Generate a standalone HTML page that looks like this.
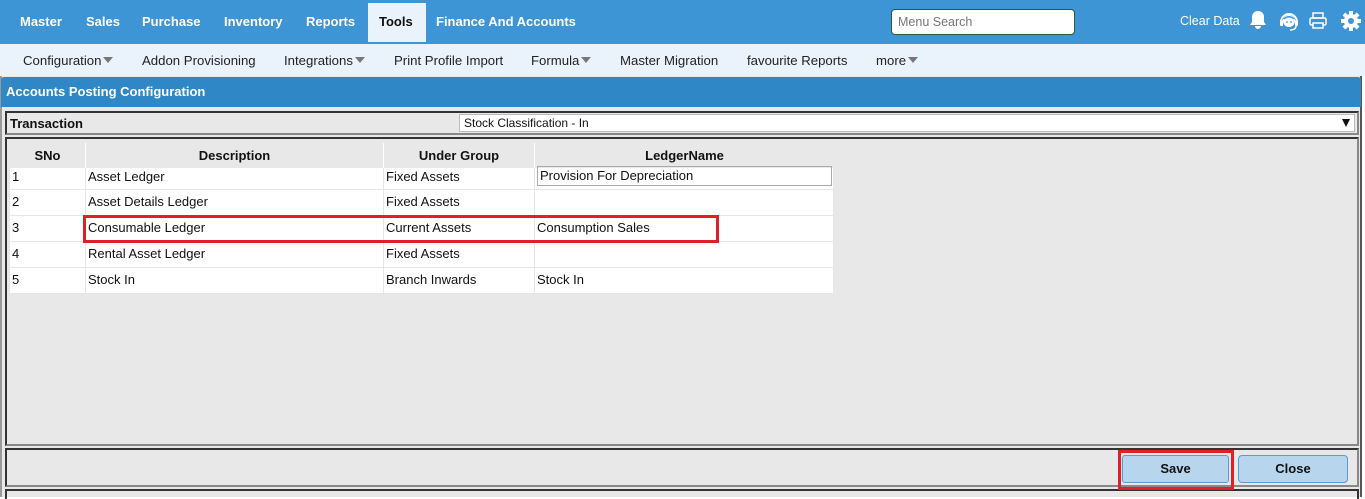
<!DOCTYPE html>
<html><head><style>
*{margin:0;padding:0;box-sizing:border-box}
body{width:1365px;height:497px;position:relative;overflow:hidden;background:#fff;font-family:"Liberation Sans",Arial,sans-serif;font-size:13px;color:#111}
.a{position:absolute}
.top{left:0;top:0;width:1365px;height:44px;background:#3d95d5}
.nav{top:14px;color:#fff;font-weight:bold;font-size:13px}
.sub{left:0;top:44px;width:1365px;height:32px;background:#eaf3fb}
.sn{top:53px;font-size:13.2px;color:#222}
.tri{display:inline-block;width:0;height:0;border-left:5px solid transparent;border-right:5px solid transparent;border-top:6px solid #777;margin-left:2px;vertical-align:2px}
.row{position:absolute;left:10px;width:824px;height:26px;background:#fff;border-bottom:1px solid #e6e6e6}
.row div{position:absolute;top:0;height:25px;line-height:24px;padding-left:2px;border-right:1px solid #e6e6e6;font-size:13px}
.c1{left:0;width:76px}.c2{left:76px;width:298px}.c3{left:374px;width:151px}.c4{left:525px;width:299px}
.hd{position:absolute;left:10px;top:143px;width:824px;height:25px;background:#e8e8e8}
.hd div{position:absolute;top:0;height:25px;line-height:25px;text-align:center;font-weight:bold;border-right:1px solid #fff;font-size:13px}
</style></head><body>
<div class="a top"></div>
<div class="a nav" style="left:20px">Master</div>
<div class="a nav" style="left:86px">Sales</div>
<div class="a nav" style="left:142px">Purchase</div>
<div class="a nav" style="left:224px">Inventory</div>
<div class="a nav" style="left:306px">Reports</div>
<div class="a" style="left:368px;top:3px;width:58px;height:39px;background:#eaf3fb"></div>
<div class="a nav" style="left:379px;color:#111">Tools</div>
<div class="a nav" style="left:436px">Finance And Accounts</div>
<div class="a" style="left:891px;top:9px;width:184px;height:26px;background:#fff;border:1px solid #2e5a3a;border-radius:4px;color:#777;font-size:12.5px;padding:5px 6px">Menu Search</div>
<div class="a" style="left:1180px;top:14px;color:#fff;font-size:12.5px">Clear Data</div>
<svg class="a" style="left:1249px;top:10px" width="18" height="20" viewBox="0 0 18 20"><path d="M9 1c-4 0-6 3-6 6v5l-2 3h16l-2-3V7c0-3-2-6-6-6z M6 16a3 3 0 0 0 6 0z" fill="#fff"/></svg>
<svg class="a" style="left:1277px;top:9px" width="24" height="24" viewBox="0 0 24 24"><path d="M4 13a8 8 0 0 1 16 0" stroke="#fff" stroke-width="2" fill="none"/><circle cx="12" cy="12" r="6" fill="#fff"/><rect x="3" y="11" width="3" height="6" rx="1" fill="#fff"/><rect x="18" y="11" width="3" height="6" rx="1" fill="#fff"/><path d="M19 17c0 3-3 4-6 4" stroke="#fff" stroke-width="1.5" fill="none"/><path d="M7 10c3-3 7-3 10 0" stroke="#3d95d5" stroke-width="1.5" fill="none"/><circle cx="10" cy="13" r="0.9" fill="#3d95d5"/><circle cx="14" cy="13" r="0.9" fill="#3d95d5"/></svg>
<svg class="a" style="left:1309px;top:12px" width="18" height="18" viewBox="0 0 18 18"><rect x="4" y="1" width="10" height="5" fill="none" stroke="#fff" stroke-width="1.5"/><rect x="1" y="6" width="16" height="7" rx="1.5" fill="none" stroke="#fff" stroke-width="1.5"/><rect x="4" y="11" width="10" height="5" fill="#3d95d5" stroke="#fff" stroke-width="1.5"/></svg>
<svg class="a" style="left:1340px;top:10px" width="22" height="22" viewBox="0 0 22 22"><g fill="#fff"><circle cx="11" cy="11" r="7"/><rect x="9" y="1" width="4" height="20"/><rect x="1" y="9" width="20" height="4"/><rect x="9" y="1" width="4" height="20" transform="rotate(45 11 11)"/><rect x="9" y="1" width="4" height="20" transform="rotate(-45 11 11)"/></g><circle cx="11" cy="11" r="3" fill="#3d95d5"/></svg>
<div class="a sub"></div>
<div class="a sn" style="left:23px">Configuration<span class="tri"></span></div>
<div class="a sn" style="left:142px">Addon Provisioning</div>
<div class="a sn" style="left:284px">Integrations<span class="tri"></span></div>
<div class="a sn" style="left:394px">Print Profile Import</div>
<div class="a sn" style="left:531px">Formula<span class="tri"></span></div>
<div class="a sn" style="left:620px">Master Migration</div>
<div class="a sn" style="left:747px">favourite Reports</div>
<div class="a sn" style="left:876px">more<span class="tri"></span></div>
<div class="a" style="left:0;top:76px;width:1362px;height:421px;background:#e8e8e8;border-left:2px solid #999;border-right:2px solid #555"></div>
<div class="a" style="left:1px;top:77px;width:1360px;height:30px;background:#2f87c6;border-radius:3px 3px 0 0"></div>
<div class="a" style="left:6px;top:84px;color:#fff;font-weight:bold;font-size:13px">Accounts Posting Configuration</div>
<div class="a" style="left:5px;top:111px;width:1354px;height:24px;border:2px solid #333;border-right-color:#888;border-bottom-color:#888"></div>
<div class="a" style="left:10px;top:116px;font-weight:bold;font-size:13px">Transaction</div>
<div class="a" style="left:459px;top:114px;width:896px;height:18px;background:#fff;border:1px solid #bbb;font-size:12px;padding:1px 4px">Stock Classification - In</div>
<div class="a" style="left:1342px;top:119px;width:0;height:0;border-left:4px solid transparent;border-right:4px solid transparent;border-top:8px solid #111"></div>
<div class="a" style="left:5px;top:137px;width:1354px;height:309px;border:2px solid #333;border-right-color:#888;border-bottom-color:#888"></div>
<div class="hd"><div class="c1">SNo</div><div class="c2">Description</div><div class="c3">Under Group</div><div class="c4" style="border:none">LedgerName</div></div>
<div class="row" style="top:168px;height:22px"><div class="c1" style="height:21px;line-height:18px">1</div><div class="c2" style="height:21px;line-height:18px">Asset Ledger</div><div class="c3" style="height:21px;line-height:18px">Fixed Assets</div><div class="c4" style="height:21px;padding:0"><div style="position:absolute;left:2px;top:-2px;width:295px;height:20px;border:1px solid #aaa;line-height:18px;padding-left:2px">Provision For Depreciation</div></div></div>
<div class="row" style="top:190px"><div class="c1">2</div><div class="c2">Asset Details Ledger</div><div class="c3">Fixed Assets</div><div class="c4"></div></div>
<div class="row" style="top:216px"><div class="c1">3</div><div class="c2">Consumable Ledger</div><div class="c3">Current Assets</div><div class="c4">Consumption Sales</div></div>
<div class="row" style="top:242px"><div class="c1">4</div><div class="c2">Rental Asset Ledger</div><div class="c3">Fixed Assets</div><div class="c4"></div></div>
<div class="row" style="top:268px"><div class="c1">5</div><div class="c2">Stock In</div><div class="c3">Branch Inwards</div><div class="c4">Stock In</div></div>
<div class="a" style="left:83px;top:215px;width:636px;height:28px;border:3px solid #e01f26"></div>
<div class="a" style="left:5px;top:448px;width:1354px;height:39px;border:2px solid #333;border-right-color:#888;border-bottom-color:#888"></div>
<div class="a" style="left:5px;top:489px;width:1354px;height:10px;border:2px solid #333;border-bottom:none"></div>
<div class="a" style="left:1122px;top:455px;width:107px;height:28px;background:#b8d5ee;border:1px solid #5a9bd5;border-radius:3px;text-align:center;font-weight:bold;line-height:26px">Save</div>
<div class="a" style="left:1118px;top:450px;width:116px;height:40px;border:3px solid #e01f26"></div>
<div class="a" style="left:1238px;top:455px;width:110px;height:28px;background:#b8d5ee;border:1px solid #5a9bd5;border-radius:4px;text-align:center;font-weight:bold;line-height:26px">Close</div>
</body></html>
